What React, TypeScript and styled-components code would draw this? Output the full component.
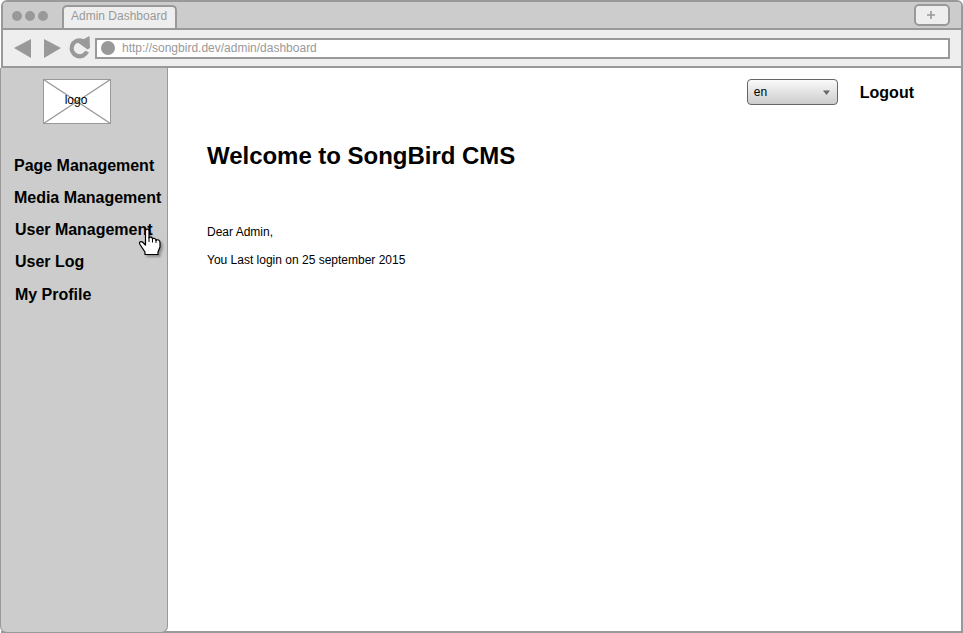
import React from "react";
import styled, { createGlobalStyle } from "styled-components";

const line = "#999";

const GlobalStyle = createGlobalStyle`
  *, *::before, *::after { box-sizing: border-box; }
  body { margin: 0; background: #fff; font-family: "Liberation Sans", Arial, sans-serif; color: #000; overflow: hidden; }
  h1, p { margin: 0; }
`;

const Window = styled.div`
  width: 963px;
  height: 633px;
  display: flex;
  flex-direction: column;
`;

const Chrome = styled.header`
  margin-left: 1px;
  height: 68px;
  border: 2px solid ${line};
  border-radius: 6px 6px 0 0;
  background: #eee;
  display: flex;
  flex-direction: column;
  overflow: hidden;
`;

const TabStrip = styled.div`
  height: 28px;
  flex: none;
  display: flex;
  align-items: flex-start;
  background: #ccc;
  border-bottom: 2px solid ${line};
`;

const Dots = styled.div`
  display: flex;
  gap: 3px;
  padding: 9px 0 0 9px;
  width: 59px;
`;

const Dot = styled.span<{ $size: number }>`
  width: ${({ $size }) => $size}px;
  height: ${({ $size }) => $size}px;
  border-radius: 50%;
  background: ${line};
  flex: none;
`;

const Tab = styled.div`
  width: 115px;
  height: 23px;
  margin-top: 3px;
  padding-left: 7px;
  border: 2px solid ${line};
  border-bottom: 0;
  border-radius: 5px 5px 0 0;
  background: #eee;
  color: ${line};
  font-size: 12px;
  line-height: 19px;
  white-space: nowrap;
`;

const NewTab = styled.button`
  width: 36px;
  height: 22px;
  margin: 2px 11px 0 auto;
  padding: 0 2px 0 0;
  border: 2px solid ${line};
  border-radius: 5px;
  background: #eee;
  display: flex;
  align-items: center;
  justify-content: center;
`;

const Toolbar = styled.div`
  flex: 1;
  display: flex;
  align-items: center;
  padding: 0 11px 0 10px;
`;

const NavIcons = styled.svg`
  width: 82px;
  height: 36px;
  flex: none;
`;

const Address = styled.div`
  flex: 1;
  height: 21px;
  border: 2px solid ${line};
  background: #fff;
  color: ${line};
  display: flex;
  align-items: center;
  gap: 7px;
  padding-left: 4px;
  font-size: 12px;
  line-height: 14px;
`;

const Body = styled.div`
  flex: 1;
  display: flex;
  background: linear-gradient(${line}, ${line}) 1px 100% / 962px 2px no-repeat;
`;

const Sidebar = styled.aside`
  width: 168px;
  height: 565px;
  border: 1px solid ${line};
  border-top: 0;
  border-radius: 0 0 7px 7px;
  background: #ccc;
`;

const Logo = styled.div`
  display: grid;
  width: 68px;
  height: 45px;
  margin: 11px 0 0 42px;
  > * { grid-area: 1 / 1; }
`;

const LogoText = styled.span`
  place-self: center;
  font-size: 12px;
  line-height: 14px;
  margin: 0 2px 3px 0;
`;

const Menu = styled.nav`
  display: flex;
  flex-direction: column;
  margin-top: 26px;
`;

const MenuItem = styled.a<{ $indent?: number; $gap?: number }>`
  height: 32px;
  line-height: 32px;
  font-size: 16px;
  font-weight: 700;
  letter-spacing: -0.02px;
  white-space: nowrap;
  margin-top: ${({ $gap = 0 }) => $gap}px;
  padding-left: ${({ $indent = 13 }) => $indent}px;
`;

const Main = styled.main`
  flex: 1;
  border-right: 2px solid ${line};
  padding-left: 39px;
`;

const Account = styled.div`
  display: flex;
  justify-content: flex-end;
  align-items: center;
  gap: 22px;
  height: 26px;
  margin-top: 11px;
  padding-right: 47px;
`;

const Language = styled.div`
  width: 91px;
  height: 26px;
  border: 1px solid #666;
  border-radius: 4px;
  background: linear-gradient(#fafafa, #ccc);
  display: flex;
  align-items: center;
  justify-content: space-between;
  padding: 0 7px 0 6px;
  font-size: 12px;
`;

const Logout = styled.a`
  font-size: 16px;
  line-height: 18px;
  font-weight: 700;
  padding-top: 2px;
`;

const Title = styled.h1`
  font-size: 24px;
  line-height: 28px;
  letter-spacing: -0.03px;
  margin-top: 37px;
`;

const Line = styled.p<{ $top: number }>`
  font-size: 12px;
  line-height: 14px;
  margin-top: ${({ $top }) => $top}px;
`;

const Cursor = styled.svg`
  position: absolute;
  left: 136px;
  top: 226px;
  filter: drop-shadow(2px 2px 1px rgba(0, 0, 0, 0.3));
`;

export default function App() {
  return (
    <Window>
      <GlobalStyle />
      <Chrome>
        <TabStrip>
          <Dots><Dot $size={10} /><Dot $size={10} /><Dot $size={10} /></Dots>
          <Tab>Admin Dashboard</Tab>
          <NewTab aria-label="New tab">
            <svg width="8" height="8"><path d="M4 0V8M0 4H8" stroke={line} strokeWidth="1.600" /></svg>
          </NewTab>
        </TabStrip>
        <Toolbar>
          <NavIcons viewBox="0 0 82 36" fill={line}>
            <path d="M1 18 18 9V28Z" />
            <path d="M31 9 48 18 31 28Z" />
            <path d="M74 21.500A8 8 0 1 1 69 10.700" fill="none" stroke={line} strokeWidth="4.200" />
            <path d="M63.500 11.500 66 9 71 9 76.500 6 77 18 74.500 19.500Z" />
          </NavIcons>
          <Address><Dot $size={14} />http://songbird.dev/admin/dashboard</Address>
        </Toolbar>
      </Chrome>
      <Body>
        <Sidebar>
          <Logo>
            <svg width="68" height="45">
              <rect x=".5" y=".5" width="67" height="44" fill="#fff" stroke={line} />
              <path d="M.5.5 67.500 44.500M67.500.5.5 44.500" stroke={line} strokeWidth="1.300" />
            </svg>
            <LogoText>logo</LogoText>
          </Logo>
          <Menu>
            <MenuItem>Page Management</MenuItem>
            <MenuItem>Media Management</MenuItem>
            <MenuItem $indent={14}>User Management</MenuItem>
            <MenuItem $indent={14}>User Log</MenuItem>
            <MenuItem $indent={14} $gap={1}>My Profile</MenuItem>
          </Menu>
        </Sidebar>
        <Main>
          <Account>
            <Language>
              en
              <svg width="7" height="5"><path d="M0 .5H7L3.500 5Z" fill="#666" /></svg>
            </Language>
            <Logout>Logout</Logout>
          </Account>
          <Title>Welcome to SongBird CMS</Title>
          <Line $top={55}>Dear Admin,</Line>
          <Line $top={14}>You Last login on 25 september 2015</Line>
        </Main>
      </Body>
      <Cursor width="28" height="32" viewBox="0 0 28 32">
        <path
          d="M9 28.500V26L4 18.500C2.500 16 5 14.500 7 16.500L9.500 19V5C9.500 2.500 13 2.500 13 5V12C13.500 10.500 16.500 11 16.500 13C17.500 11.500 20 12.500 20 14.500C21.500 13 24 14 24 16.500V21L22 26V28.500Z"
          fill="#fff" stroke="#000" strokeWidth="1.200" strokeLinejoin="round"
        />
        <path d="M13 11V16M16.500 12.500V16.500M20 14V17" stroke="#000" />
      </Cursor>
    </Window>
  );
}
